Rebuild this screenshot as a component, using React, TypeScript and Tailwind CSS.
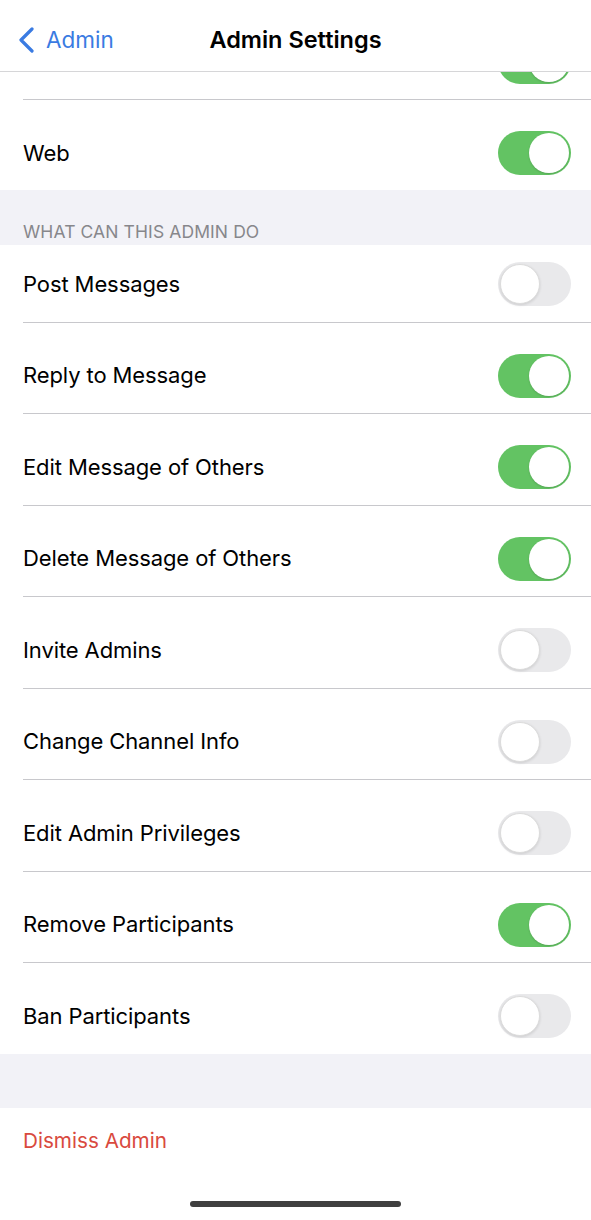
import React from 'react';

const font = { fontFamily: "Inter, 'Noto Sans', 'Liberation Sans', sans-serif" };

type Perm = { label: string; on: boolean };

const perms: Perm[] = [
  { label: 'Post Messages', on: false },
  { label: 'Reply to Message', on: true },
  { label: 'Edit Message of Others', on: true },
  { label: 'Delete Message of Others', on: true },
  { label: 'Invite Admins', on: false },
  { label: 'Change Channel Info', on: false },
  { label: 'Edit Admin Privileges', on: false },
  { label: 'Remove Participants', on: true },
  { label: 'Ban Participants', on: false },
];

function Toggle({ on }: { on: boolean }) {
  return (
    <div
      className={`w-[73px] h-[44px] rounded-full flex items-center p-[2px] shrink-0 ${
        on ? 'bg-[#63c363] justify-end' : 'bg-[#e9e9eb] justify-start'
      }`}
    >
      <div
        className={`w-[40px] h-[40px] rounded-full bg-white ${
          on ? 'shadow-[0_1px_2px_rgba(0,0,0,0.15)]' : 'border border-[#dcdcdc] shadow-[0_1px_3px_rgba(0,0,0,0.12)]'
        }`}
      />
    </div>
  );
}

function Row({ label, on, top, bottom, sep }: { label: string; on: boolean; top: string; bottom: string; sep: boolean }) {
  return (
    <div className="bg-white">
      <div className={`flex items-center justify-between pl-[23px] pr-[20px] ${top} ${bottom}`}>
        <span className="text-[22px] text-black tracking-[-0.1px]">{label}</span>
        <Toggle on={on} />
      </div>
      {sep && <div className="ml-[23px] h-px bg-[#c8c8cc]" />}
    </div>
  );
}

export default function App() {
  return (
    <div className="relative w-[591px] h-[1220px] bg-white overflow-hidden" style={font}>
      {/* nav bar */}
      <header className="h-[72px] bg-white border-b border-[#d6d6d8] flex items-center relative">
        <div className="flex items-center pl-[17px] text-[#3a7be2] mt-[9px]">
          <svg width="19" height="26" viewBox="0 0 19 26" fill="none">
            <path d="M15 2 L4 13 L15 24" stroke="#3a7be2" strokeWidth="3.2" strokeLinecap="round" strokeLinejoin="round" />
          </svg>
          <span className="ml-[10px] text-[22.5px]">Admin</span>
        </div>
        <div className="absolute left-0 right-0 text-center mt-[9px] text-[23.5px] font-semibold text-black pointer-events-none">
          Admin Settings
        </div>
      </header>

      {/* scrolled list */}
      <div className="bg-[#f2f2f7]">
        {/* row scrolled under nav bar */}
        <div className="bg-white h-[27px] overflow-hidden flex justify-end pr-[20px] items-end">
          <div className="mb-[15px]">
            <Toggle on={true} />
          </div>
        </div>
        <div className="bg-white">
          <div className="ml-[23px] h-px bg-[#c8c8cc]" />
        </div>
        <Row label="Web" on={true} top="pt-[31px]" bottom="pb-[15px]" sep={false} />

        <div className="h-[55px] flex items-end pl-[23px] pb-[0px]">
          <span className="text-[17.5px] leading-[26px] text-[#87878b] tracking-[0.1px]">WHAT CAN THIS ADMIN DO</span>
        </div>

        {perms.map((p, i) => (
          <Row
            key={p.label}
            label={p.label}
            on={p.on}
            top={i === 0 ? 'pt-[17px]' : 'pt-[31px]'}
            bottom={i === perms.length - 1 ? 'pb-[16px]' : 'pb-[15.5px]'}
            sep={i !== perms.length - 1}
          />
        ))}

        <div className="h-[54px]" />

        <div className="bg-white h-[200px] pl-[23px] pt-[17px]">
          <span className="text-[20.7px] text-[#d94a3e]">Dismiss Admin</span>
        </div>
      </div>

      {/* home indicator */}
      <div className="absolute bottom-[13px] left-[190px] w-[211px] h-[6px] rounded-full bg-[#3f3f3f]" />
    </div>
  );
}
